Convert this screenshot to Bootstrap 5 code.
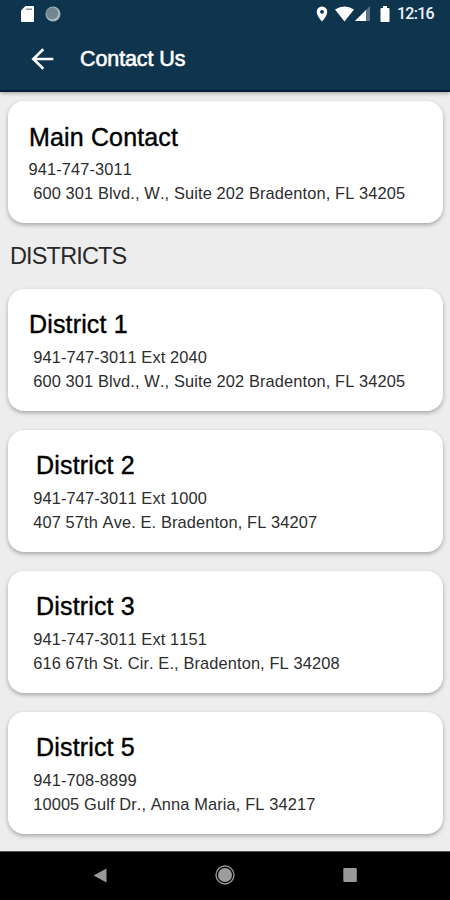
<!DOCTYPE html>
<html lang="en">
<head>
<meta charset="utf-8">
<meta name="viewport" content="width=device-width, initial-scale=1">
<title>Contact Us</title>
<link href="https://cdn.jsdelivr.net/npm/bootstrap@5.3.0/dist/css/bootstrap.min.css" rel="stylesheet">
<style>
body{font-family:"Liberation Sans",Arial,sans-serif;background:#ededed;height:900px;color:#111}
.app-head{background:#0f344e;height:92px;border-bottom:2px solid #061f39;box-shadow:0 1px 4px rgba(0,0,0,.35)}
.status{height:27px;padding:0 16px 0 21px}
.clock{font:500 16px/27px Roboto,sans-serif;width:37px;margin-left:7px;letter-spacing:-.75px;white-space:nowrap;color:#f0f4f8}
.toolbar{height:63px;padding-left:31px}
.toolbar h1{font-size:21.5px;line-height:26px;margin-left:26px;letter-spacing:-.1px;-webkit-text-stroke:.6px #fff}
.contact{height:122px;border:0;border-radius:16px;box-shadow:0 2px 4px rgba(0,0,0,.3);padding:19px 0 0 21px;margin-bottom:19px}
.contact h2{font-size:25px;line-height:32px;margin:0 0 5px;color:#000;-webkit-text-stroke:.4px #000;white-space:pre;letter-spacing:.15px}
.contact:first-child{padding-top:20px}
.contact:first-child h2{margin-bottom:4px}
.contact p{font-size:16.4px;line-height:24px;margin:0 0 0 -.5px;white-space:pre;letter-spacing:.12px;font-kerning:none;color:#2d2d2d}
.section-title{font-size:23.5px;line-height:30px;margin:-1px 0 18px 2px;letter-spacing:-.85px;color:#292929}
.list-area{padding:9px 7px 0 8px}
.system-nav{height:49px;border-top:1px solid #555;padding:0 93px 2px}
.sync-icon{margin-left:11px}
.wifi-icon{margin-left:7px}
.signal-icon{margin-left:1px}
.battery-icon{margin-left:10px}
svg{display:block;flex:none}
</style>
<script src="https://cdn.jsdelivr.net/npm/bootstrap@5.3.0/dist/js/bootstrap.bundle.min.js"></script>
</head>
<body class="d-flex flex-column overflow-hidden">
<header class="app-head text-white flex-shrink-0 position-relative">
  <div class="status d-flex align-items-center">
    <svg width="13" height="16" viewBox="0 0 13 16"><path fill="#fff" d="M4.5 0H12q1 0 1 1v14q0 1-1 1H1q-1 0-1-1V4.5z"/><path stroke="#70818d" stroke-width="1.3" d="M5 3.2h6"/></svg>
    <svg class="sync-icon" width="16" height="16" viewBox="0 0 16 16"><circle cx="8" cy="8" r="7.5" fill="#a6b7c0"/><circle cx="7.2" cy="7.2" r="6" fill="#72868f"/></svg>
    <svg class="ms-auto" width="12" height="16" viewBox="0 0 12 16"><path fill="#fff" fill-rule="evenodd" d="M6 .5A5.3 5.3 0 0 1 11.3 5.8C11.3 10 6 15.5 6 15.5S.7 10 .7 5.8A5.3 5.3 0 0 1 6 .5m0 3.4a1.9 1.9 0 1 0 0 3.8 1.9 1.9 0 0 0 0-3.8"/></svg>
    <svg class="wifi-icon" width="19" height="16" viewBox="0 0 19 16"><path fill="#fff" d="M0 3.4Q9.5-2.6 19 3.4L9.5 15.5z"/></svg>
    <svg class="signal-icon" width="15" height="15" viewBox="0 0 15 15"><path fill="#597486" d="M15 0v15H0z"/><path fill="#fff" d="M11 4V15H0z"/></svg>
    <svg class="battery-icon" width="10" height="16" viewBox="0 0 10 16"><path fill="#fff" d="M3 0h4v2h1.5q1 0 1 1v12q0 1-1 1h-7q-1 0-1-1V3q0-1 1-1H3z"/></svg>
    <div class="clock">12:16</div>
  </div>
  <div class="toolbar d-flex align-items-center">
    <svg width="23" height="22" viewBox="0 0 23 22"><path fill="none" stroke="#fff" stroke-width="2.6" d="M22.3 11H2.5M12.3 1.2L2.3 11l10 9.8"/></svg>
    <h1 class="mb-0 fw-normal">Contact Us</h1>
  </div>
</header>
<main class="list-area flex-grow-1">
  <section class="card contact"><h2 class="fw-normal">Main Contact</h2><p>941-747-3011</p><p> 600 301 Blvd., W., Suite 202 Bradenton, FL 34205</p></section>
  <div class="section-title">DISTRICTS</div>
  <section class="card contact"><h2 class="fw-normal">District 1</h2><p> 941-747-3011 Ext 2040</p><p> 600 301 Blvd., W., Suite 202 Bradenton, FL 34205</p></section>
  <section class="card contact"><h2 class="fw-normal"> District 2</h2><p> 941-747-3011 Ext 1000</p><p> 407 57th Ave. E. Bradenton, FL 34207</p></section>
  <section class="card contact"><h2 class="fw-normal"> District 3</h2><p> 941-747-3011 Ext 1151</p><p> 616 67th St. Cir. E., Bradenton, FL 34208</p></section>
  <section class="card contact mb-0"><h2 class="fw-normal"> District 5</h2><p> 941-708-8899</p><p> 10005 Gulf Dr., Anna Maria, FL 34217</p></section>
</main>
<footer class="system-nav bg-black d-flex align-items-center justify-content-between flex-shrink-0">
  <svg width="14" height="15" viewBox="0 0 14 15"><path fill="#999" d="M13.5.5v14L.5 7.5z"/></svg>
  <svg width="20" height="20" viewBox="0 0 20 20"><circle cx="10" cy="10" r="9" fill="none" stroke="#929292" stroke-width="1.4"/><circle cx="10" cy="10" r="7" fill="#9d9d9d"/></svg>
  <svg width="14" height="14" viewBox="0 0 14 14"><rect x=".3" width="13.5" height="14" rx="1" fill="#999"/></svg>
</footer>
</body>
</html>
